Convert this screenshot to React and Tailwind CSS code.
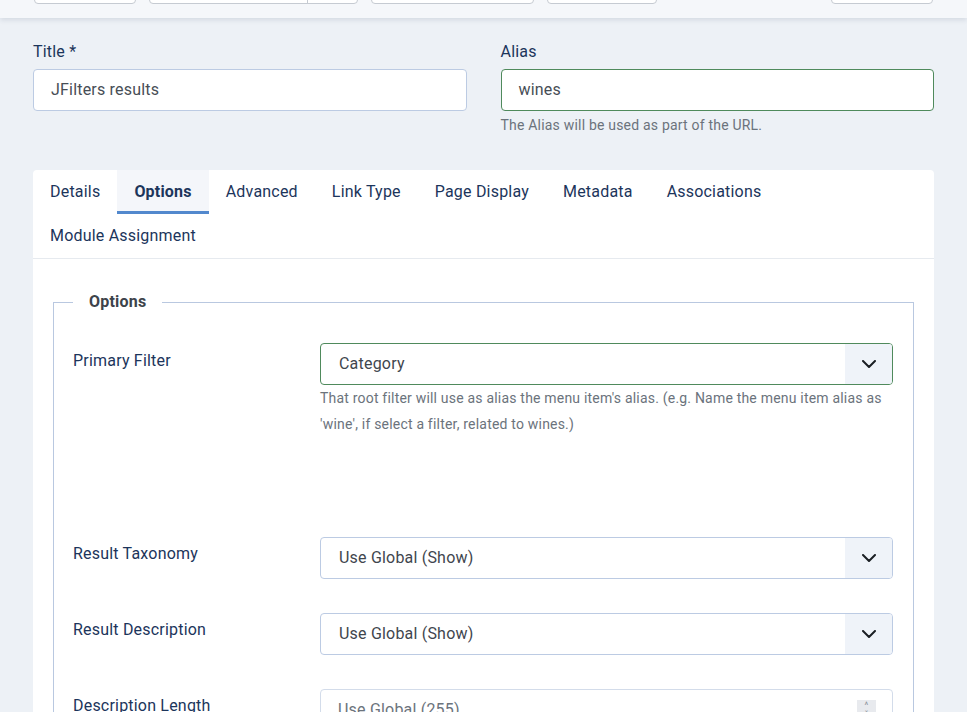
import React, { useState } from 'react';

const tabs = ['Details', 'Options', 'Advanced', 'Link Type', 'Page Display', 'Metadata', 'Associations', 'Module Assignment'];

const Chevron = () => (
    <svg width="14" height="8" viewBox="0 0 14 8" fill="none">
        <path d="M1 1l6 6 6-6" stroke="#1b1f24" strokeWidth="2" strokeLinecap="round" strokeLinejoin="round" />
    </svg>
);

const SelectBox = ({ value, valid }) => (
    <div
        className={`flex h-[42px] items-stretch overflow-hidden rounded-[4px] border bg-white ${valid ? 'border-[#4f8a5c]' : 'border-[#bccbe3]'
            }`}
    >
        <span className="flex flex-1 items-center pl-[18px] text-[16px] text-[#3f464e]">{value}</span>
        <span className="flex w-[47px] items-center justify-center bg-[#eff3f9]">
            <Chevron />
        </span>
    </div>
);

const FieldRow = ({ label, children, className = 'mb-[34px]', labelPad = 'pt-[5px]' }) => (
    <div className={`flex ${className}`}>
        <div className={`w-[247px] shrink-0 ${labelPad} text-[16px] leading-[24px] text-[#1c355b]`}>{label}</div>
        <div className="flex-1">{children}</div>
    </div>
);

const App = () => {
    const [activeTab, setActiveTab] = useState('Options');

    return (
        <div className="min-h-[712px] bg-[#edf1f6] font-['Roboto','Liberation_Sans',sans-serif] tracking-[0.2px]">
            {/* toolbar, mostly scrolled out of view */}
            <div className="flex h-[18px] items-end overflow-hidden bg-[#f5f7fa] px-[34px] pb-[14px] shadow-[0_2px_5px_rgba(30,50,80,0.12)]">
                <div className="flex items-end gap-[13px]">
                    <div className="h-[36px] w-[102px] rounded-[4px] border border-[#c6cbd2] bg-white"></div>
                    <div className="flex h-[36px] w-[209px] rounded-[4px] border border-[#c6cbd2] bg-white">
                        <div className="w-[158px] border-r border-[#c6cbd2]"></div>
                    </div>
                    <div className="h-[36px] w-[163px] rounded-[4px] border border-[#c6cbd2] bg-white"></div>
                    <div className="h-[36px] w-[110px] rounded-[4px] border border-[#c6cbd2] bg-white"></div>
                </div>
                <div className="ml-auto h-[36px] w-[102px] rounded-[4px] border border-[#c6cbd2] bg-white"></div>
            </div>

            <div className="px-[33px] pt-[21px]">
                <div className="grid grid-cols-2 gap-[34px]">
                    <div>
                        <label className="mb-[6px] block pt-[1px] text-[16px] leading-[23px] text-[#1c355b]">Title *</label>
                        <div className="flex h-[42px] items-center rounded-[4px] border border-[#bccbe3] bg-white pl-[17px] text-[16px] text-[#474e56]">
                            JFilters results
                        </div>
                    </div>
                    <div>
                        <label className="mb-[6px] block pt-[1px] text-[16px] leading-[23px] text-[#1c355b]">Alias</label>
                        <div className="flex h-[42px] items-center rounded-[4px] border border-[#4f8a5c] bg-white pl-[17px] text-[16px] text-[#474e56]">
                            wines
                        </div>
                        <p className="mt-[4px] text-[14px] leading-[20px] text-[#6b737c]">The Alias will be used as part of the URL.</p>
                    </div>
                </div>

                <div className="mt-[35px] rounded-[4px] bg-white">
                    <div className="flex flex-wrap border-b border-[#e6eaef]">
                        {tabs.map((tab) => (
                            <button
                                key={tab}
                                onClick={() => setActiveTab(tab)}
                                className={`h-[44px] px-[17px] text-[16px] tracking-[0.2px] text-[#1c355b] ${activeTab === tab
                                    ? 'border-b-[3px] border-[#5288cd] bg-[#f4f6fa] pt-[3px] font-bold'
                                    : ''
                                    }`}
                            >
                                {tab}
                            </button>
                        ))}
                    </div>

                    <div className="px-[20px] pt-[31px] pb-[40px]">
                        <fieldset className="border border-[#b9c8e0] pr-[20px] pl-[19px] pb-[30px]">
                            <legend className="px-[16px] text-[16px] font-bold leading-[24px] text-[#3d434a]">Options</legend>

                            <div className="pt-[29px]">
                                <FieldRow label="Primary Filter" className="mb-[100px]" labelPad="pt-[6px]">
                                    <SelectBox value="Category" valid />
                                    <p className="text-[14px] leading-[26px] text-[#6b737c]">
                                        That root filter will use as alias the menu item's alias. (e.g. Name the menu item alias as
                                        'wine', if select a filter, related to wines.)
                                    </p>
                                </FieldRow>

                                <FieldRow label="Result Taxonomy">
                                    <SelectBox value="Use Global (Show)" />
                                </FieldRow>

                                <FieldRow label="Result Description">
                                    <SelectBox value="Use Global (Show)" />
                                </FieldRow>

                                <FieldRow label="Description Length" className="mb-0">
                                    <div className="flex h-[42px] items-center rounded-[4px] border border-[#d3dcea] bg-white pl-[17px] pr-[16px]">
                                        <span className="flex-1 text-[16px] text-[#6b737c]">Use Global (255)</span>
                                        <span className="flex h-[20px] w-[19px] flex-col bg-[#e8eaee] text-[#8a9099]">
                                            <span className="flex h-[10px] items-center justify-center text-[9px] leading-none">^</span>
                                            <span className="flex h-[10px] items-center justify-center text-[9px] leading-none">ˇ</span>
                                        </span>
                                    </div>
                                </FieldRow>
                            </div>
                        </fieldset>
                    </div>
                </div>
            </div>
        </div>
    );
};

export default App;
